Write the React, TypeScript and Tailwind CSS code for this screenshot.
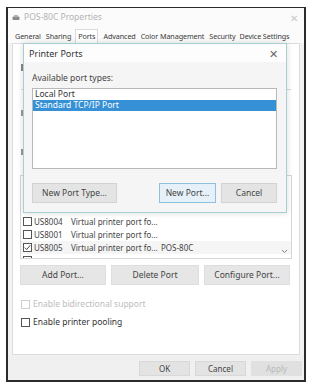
import React from "react";

const font = { fontFamily: '"Noto Sans", "Open Sans", sans-serif' };

function Box({ checked = false, disabled = false }: { checked?: boolean; disabled?: boolean }) {
  return (
    <div
      className={
        "w-[9px] h-[9px] border bg-white flex items-center justify-center shrink-0 " +
        (disabled ? "border-[#cfcfcf]" : "border-[#555]")
      }
    >
      {checked && (
        <svg width="7" height="7" viewBox="0 0 7 7">
          <path d="M0.8 3.6 L2.7 5.5 L6.3 1.2" fill="none" stroke="#333" strokeWidth="0.9" />
        </svg>
      )}
    </div>
  );
}

function PortRow({ name, desc, printer = "", checked = false }: { name: string; desc: string; printer?: string; checked?: boolean }) {
  return (
    <div className="h-[13px] flex items-center pl-[2px] text-[8px] text-[#444] leading-none whitespace-nowrap">
      <Box checked={checked} />
      <span className="ml-[2px] w-[37px] shrink-0">{name}</span>
      <span className="w-[90px] shrink-0">{desc}</span>
      <span>{printer}</span>
    </div>
  );
}

function EmptyRow() {
  return (
    <div className="h-[13px] flex items-center pl-[2px]">
      <Box />
    </div>
  );
}

export default function App() {
  return (
    <div className="w-[312px] h-[386px] bg-white relative overflow-hidden whitespace-nowrap" style={font}>
      <div className="ml-[6px] mt-[7px] w-[300px] h-[375px] border-2 border-t border-[#2b2b2b] bg-[#f3f3f3] flex flex-col">
        {/* title bar */}
        <div className="h-[19px] bg-[#fbfbfb] flex items-center pl-[4px] pr-[6px] shrink-0">
          <svg width="8" height="6" viewBox="0 0 8 6" className="mr-[4px]">
            <rect x="0.5" y="1.5" width="7" height="3.5" rx="1" fill="#8a8a8a" />
            <rect x="2" y="0" width="4" height="2" fill="#b5b5b5" />
          </svg>
          <span className="text-[8.5px] text-[#b3b3b3] leading-none">POS-80C Properties</span>
          <span className="ml-auto text-[10px] text-[#c8c8c8] leading-none">✕</span>
        </div>
        {/* tabs */}
        <div className="h-[16px] flex items-end pl-[7px] text-[7.2px] tracking-[-0.1px] text-[#3a3a3a] leading-none shrink-0 bg-[#fbfbfb]">
          <span className="pb-[3px] mr-[5px]">General</span>
          <span className="pb-[3px] mr-[4px]">Sharing</span>
          <span className="pb-[3px] px-[2px] pt-[3px] bg-white border border-b-0 border-[#dadada] mr-[5px]">Ports</span>
          <span className="pb-[3px] mr-[5px]">Advanced</span>
          <span className="pb-[3px] mr-[5px]">Color Management</span>
          <span className="pb-[3px] mr-[4px]">Security</span>
          <span className="pb-[3px]">Device Settings</span>
        </div>
        {/* panel */}
        <div className="mx-[4px] h-[312px] bg-white border border-[#dcdcdc] shrink-0 flex flex-col">
          <div className="h-[131px] pl-[8px] pr-[8px] flex flex-col">
            <div className="mt-[20px] w-[3px] h-[7px] bg-[#888]" />
            <div className="mt-[18px] h-px bg-[#d8d8d8]" />
            <div className="mt-[20px] w-[3px] h-[6px] bg-[#999]" />
            <div className="mt-[33px] w-[3px] h-[6px] bg-[#999]" />
          </div>
          <div className="mx-[7px] h-[84px] border border-[#d6d6d6] relative overflow-hidden">
            <EmptyRow />
            <EmptyRow />
            <EmptyRow />
            <PortRow name="US8004" desc="Virtual printer port fo..." />
            <PortRow name="US8001" desc="Virtual printer port fo..." />
            <div className="bg-[#f5f5f5]">
              <PortRow name="US8005" desc="Virtual printer port fo..." printer="POS-80C" checked />
            </div>
            <EmptyRow />
            <svg width="7" height="5" viewBox="0 0 7 5" className="absolute right-[3px] bottom-[4px]">
              <path d="M1 1 L3.5 3.5 L6 1" fill="none" stroke="#777" strokeWidth="0.9" />
            </svg>
          </div>
          <div className="mt-[6px] mx-[7px] flex gap-[5px] text-[8.5px] text-[#444]">
            <div className="w-[86px] h-[20px] bg-[#e6e6e6] border border-[#dedede] flex items-center justify-center">Add Port...</div>
            <div className="w-[88px] h-[20px] bg-[#e6e6e6] border border-[#dedede] flex items-center justify-center">Delete Port</div>
            <div className="w-[86px] h-[20px] bg-[#e6e6e6] border border-[#dedede] flex items-center justify-center">Configure Port...</div>
          </div>
          <div className="mt-[15px] ml-[8px] flex items-center gap-[3px] text-[8.5px] text-[#bdbdbd] leading-none">
            <Box disabled />
            <span>Enable bidirectional support</span>
          </div>
          <div className="mt-[9px] ml-[8px] flex items-center gap-[3px] text-[8.5px] text-[#333] leading-none">
            <Box />
            <span>Enable printer pooling</span>
          </div>
        </div>
        {/* bottom bar */}
        <div className="flex-1 bg-[#f0f0f0] flex justify-end items-start pt-[6px] pr-[2px] gap-[5px] text-[8px] leading-none">
          <div className="w-[51px] h-[15px] bg-[#e3e3e3] border border-[#d8d8d8] flex items-center justify-center text-[#444]">OK</div>
          <div className="w-[51px] h-[15px] bg-[#e3e3e3] border border-[#d8d8d8] flex items-center justify-center text-[#444]">Cancel</div>
          <div className="w-[51px] h-[15px] bg-[#e0e0e0] border border-[#e0e0e0] flex items-center justify-center text-[#b8b8b8]">Apply</div>
        </div>
      </div>

      {/* Printer Ports dialog */}
      <div className="absolute left-[23px] top-[43px] w-[264px] h-[170px] border border-[#a9cfd3] bg-[#f5f5f5] shadow-[0_0_6px_rgba(0,0,0,0.15)] flex flex-col">
        <div className="h-[18px] bg-[#fdfdfd] flex items-center pl-[5px] pr-[8px] shrink-0">
          <span className="text-[9px] text-[#333] leading-none">Printer Ports</span>
          <span className="ml-auto text-[11px] text-[#666] leading-none">✕</span>
        </div>
        <div className="pl-[8px] pr-[9px] pt-[12px] flex flex-col">
          <div className="text-[8.5px] text-[#444] leading-none h-[10px]">Available port types:</div>
          <div className="mt-[4px] h-[81px] border border-[#b8b8b8] bg-white text-[8.5px] leading-none">
            <div className="h-[11px] flex items-center pl-[2px] text-[#333]">Local Port</div>
            <div className="h-[11px] flex items-center pl-[2px] bg-[#3590d6] text-white">Standard TCP/IP Port</div>
          </div>
          <div className="mt-[14px] flex text-[8.5px] text-[#444]">
            <div className="w-[85px] h-[20px] bg-[#e4e4e4] border border-[#d2d2d2] flex items-center justify-center">New Port Type...</div>
            <div className="ml-[42px] w-[57px] h-[20px] bg-[#e6f0f8] border border-[#8fc0e0] flex items-center justify-center">New Port...</div>
            <div className="ml-[5px] w-[56px] h-[20px] bg-[#e4e4e4] border border-[#d2d2d2] flex items-center justify-center">Cancel</div>
          </div>
        </div>
      </div>
    </div>
  );
}
